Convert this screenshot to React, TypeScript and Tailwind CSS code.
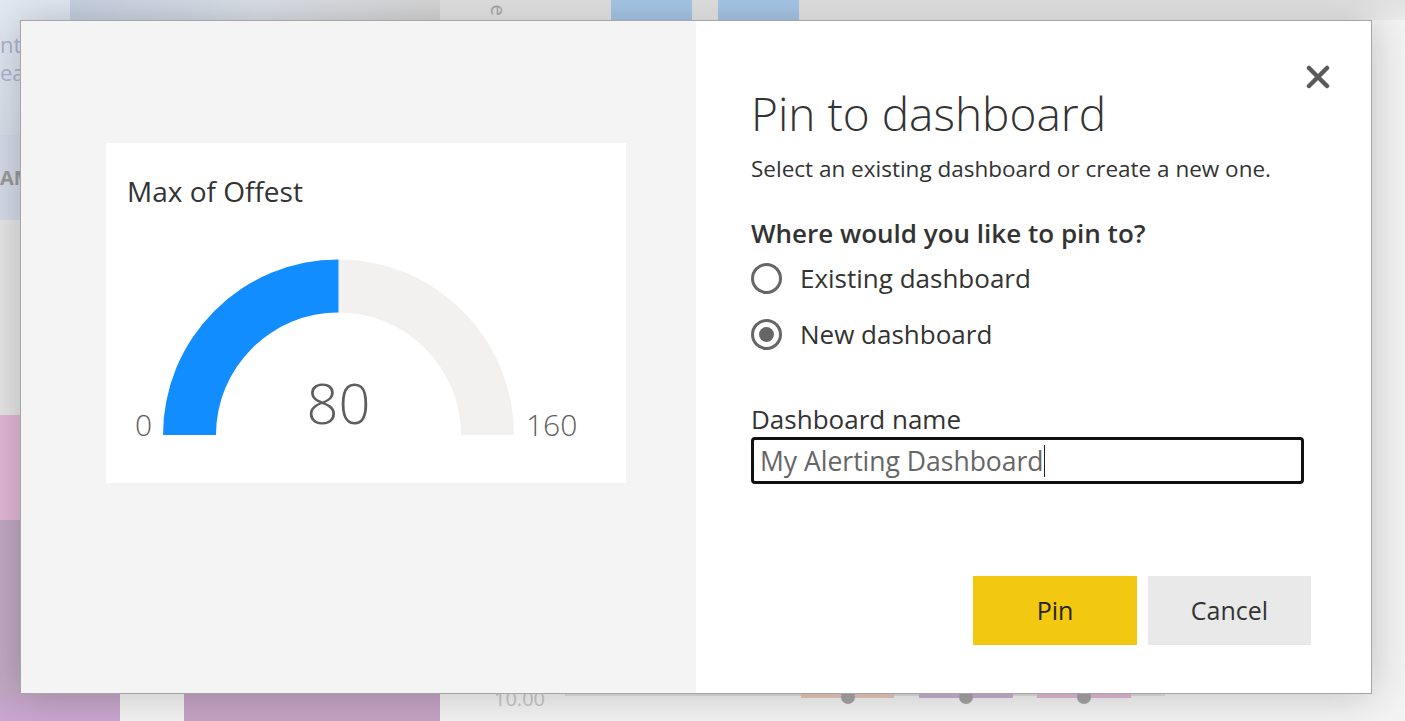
import React from 'react';

const sans = "font-['Open_Sans','Noto_Sans',sans-serif]";

function Gauge() {
  // centre of the half donut inside the card, radii in px
  const cx = 232.5;
  const cy = 292;
  const R = 175.5;
  const r = 122.5;
  const blue = `M ${cx - R} ${cy} A ${R} ${R} 0 0 1 ${cx} ${cy - R} L ${cx} ${cy - r} A ${r} ${r} 0 0 0 ${cx - r} ${cy} Z`;
  const rest = `M ${cx} ${cy - R} A ${R} ${R} 0 0 1 ${cx + R} ${cy} L ${cx + r} ${cy} A ${r} ${r} 0 0 0 ${cx} ${cy - r} Z`;
  return (
    <svg width="520" height="340" viewBox="0 0 520 340" className="absolute left-0 top-0">
      <path d={rest} fill="#F2F1EF" />
      <path d={blue} fill="#118DFF" />
      <text x="46" y="293" textAnchor="end" fontSize="30" fill="#605E5C" fontFamily="'Open Sans', sans-serif" fontWeight="300">
        0
      </text>
      <text x="420" y="293" fontSize="30" fill="#605E5C" fontFamily="'Open Sans', sans-serif" fontWeight="300">
        160
      </text>
      <text x={cx} y="281" textAnchor="middle" fontSize="56" fill="#605E5C" fontFamily="'Open Sans', sans-serif" fontWeight="300">
        80
      </text>
    </svg>
  );
}

function Radio({ checked, label }: { checked?: boolean; label: string }) {
  return (
    <div className="flex items-center h-[56px]">
      <div className="w-[31px] h-[31px] rounded-full border-[3px] border-[#666] flex items-center justify-center">
        {checked && <div className="w-[15px] h-[15px] rounded-full bg-[#666]" />}
      </div>
      <span className="ml-[18px] text-[26px] text-[#333]">{label}</span>
    </div>
  );
}

// faded report page that sits behind the modal
function Backdrop() {
  return (
    <div className="absolute inset-0 flex flex-col bg-[#f3f3f3]">
      <div className="h-[20px] flex shrink-0 bg-gradient-to-b from-[#e2e2e2] to-[#ebebeb]">
        <div className="w-[70px] bg-[#e3e9f3]" />
        <div className="w-[370px] bg-gradient-to-r from-[#c9d3e4] via-[#dde2ea] to-[#d8d8d8]" />
        <div className="w-[171px] flex justify-center">
          <span className="text-[20px] leading-[20px] text-[#a8a8a8] rotate-90 -translate-x-[28px]">e</span>
        </div>
        <div className="w-[81px] bg-[#a9c9ea]" />
        <div className="w-[26px]" />
        <div className="w-[81px] bg-[#a9c9ea]" />
      </div>

      <div className="flex-1 flex flex-col w-[20px]">
        <div className="h-[115px] bg-gradient-to-b from-[#e3e9f3] to-[#d9dfea] pt-[10px] flex flex-col">
          <span className="text-[22px] leading-[28px] text-[#aab3cf] whitespace-nowrap">nt</span>
          <span className="text-[22px] leading-[28px] text-[#aab3cf] whitespace-nowrap">ea</span>
        </div>
        <div className="h-[85px] bg-[#d4dbe8] flex items-center">
          <span className="text-[20px] leading-[20px] font-bold text-[#9a9a9a] whitespace-nowrap">AM</span>
        </div>
        <div className="h-[195px] bg-[#e6e6e6]" />
        <div className="h-[105px] bg-[#e3b8d6]" />
        <div className="flex-1 bg-[#c2a8c4]" />
      </div>

      <div className="h-[28px] flex shrink-0">
        <div className="w-[120px] bg-gradient-to-b from-[#c4a6c6] to-[#caa6d2]" />
        <div className="w-[64px]" />
        <div className="w-[256px] bg-[#c4a4c4]" />
        <span className="ml-[54px] -mt-[8px] text-[20px] leading-[28px] text-[#c6c6c6]">10.00</span>
        <div className="ml-[20px] w-[600px] h-[10px] -mt-[3px] flex items-center relative">
          <div className="absolute inset-x-0 top-[4px] h-[2px] bg-[#dedede]" />
          <div className="relative ml-[236px] w-[93px] h-[5px] bg-[#e6c7b8] flex justify-center">
            <div className="w-[14px] h-[14px] -mt-[3px] rounded-full bg-[#a4a4a4]" />
          </div>
          <div className="relative ml-[25px] w-[94px] h-[5px] bg-[#c8b0d2] flex justify-center">
            <div className="w-[14px] h-[14px] -mt-[3px] rounded-full bg-[#a4a4a4]" />
          </div>
          <div className="relative ml-[24px] w-[94px] h-[5px] bg-[#e2b8d6] flex justify-center">
            <div className="w-[14px] h-[14px] -mt-[3px] rounded-full bg-[#a4a4a4]" />
          </div>
        </div>
      </div>
    </div>
  );
}

export default function App() {
  return (
    <div className={`relative w-[1405px] h-[721px] overflow-hidden ${sans}`}>
      <Backdrop />

      {/* modal */}
      <div className="absolute left-[20px] top-[20px] w-[1352px] h-[674px] border border-[#a6a6a6] flex shadow-[0_0_40px_rgba(0,0,0,0.22)]">
        <div className="w-[675px] h-full bg-[#f4f4f4] pl-[85px] pt-[122px]">
          <div className="relative w-[520px] h-[340px] bg-white">
            <div className="pl-[21px] pt-[30px] text-[28px] leading-[36px] text-[#333]">Max of Offest</div>
            <Gauge />
          </div>
        </div>

        <div className="relative flex-1 h-full bg-white flex flex-col pl-[55px]">
          <button className="absolute right-[38px] top-[41px] w-[30px] h-[30px] flex items-center justify-center">
            <svg width="24" height="24" viewBox="0 0 24 24">
              <path d="M3 3 L21 21 M21 3 L3 21" stroke="#5a5a5a" strokeWidth="4.5" strokeLinecap="round" />
            </svg>
          </button>

          <h1 className="mt-[62px] text-[46px] leading-[60px] font-light text-[#333]">Pin to dashboard</h1>
          <p className="mt-[11px] text-[22.5px] leading-[30px] text-[#333]">Select an existing dashboard or create a new one.</p>
          <p className="mt-[32px] text-[26px] leading-[34px] font-semibold text-[#333]">Where would you like to pin to?</p>

          <div className="flex flex-col">
            <Radio label="Existing dashboard" />
            <Radio checked label="New dashboard" />
          </div>

          <label className="mt-[40px] text-[26px] leading-[34px] text-[#333]">Dashboard name</label>
          <div className="mt-[1px] w-[553px] h-[47px] border-[3px] border-[#111] rounded-[4px] flex items-center px-[6px]">
            <span className="text-[26.5px] text-[#666] leading-[30px]">My Alerting Dashboard</span>
            <span className="w-[1px] h-[32px] bg-[#222]" />
          </div>

          <div className="mt-auto mb-[48px] mr-[60px] flex justify-end gap-[11px]">
            <button className="w-[164px] h-[69px] bg-[#F2C811] text-[25px] text-[#252423]">Pin</button>
            <button className="w-[163px] h-[69px] bg-[#E9E9E9] text-[25px] text-[#333]">Cancel</button>
          </div>
        </div>
      </div>
    </div>
  );
}
